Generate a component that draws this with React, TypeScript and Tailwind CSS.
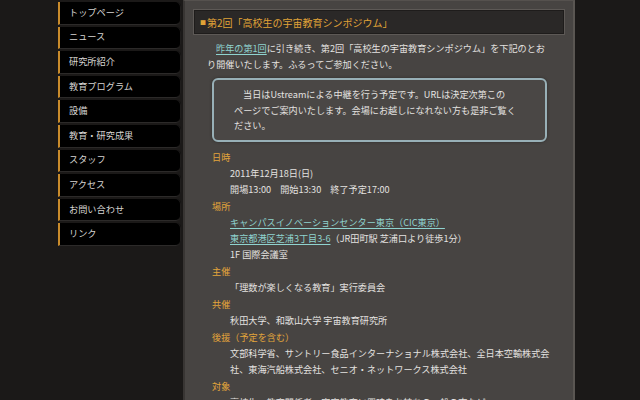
const navItems = [
  'トップページ',
  'ニュース',
  '研究所紹介',
  '教育プログラム',
  '設備',
  '教育・研究成果',
  'スタッフ',
  'アクセス',
  'お問い合わせ',
  'リンク',
]

const font = { fontFamily: '"Noto Sans CJK JP", "Noto Sans", sans-serif' }

function Link({ children }: { children: React.ReactNode }) {
  return <span className="text-[#8fd3cf] underline underline-offset-2">{children}</span>
}

function Dt({ children }: { children: React.ReactNode }) {
  return <dt className="leading-[15px] text-[#e3a53b]">{children}</dt>
}

function Dd({ children }: { children: React.ReactNode }) {
  return <dd className="mb-[2px] whitespace-nowrap pl-[18px] leading-[16px]">{children}</dd>
}

export default function App() {
  return (
    <div
      className="flex h-[400px] w-[640px] overflow-hidden bg-[#1b1918] text-[9.15px] text-[#e4e2e0]"
      style={font}
    >
      {/* 左メニュー */}
      <nav className="ml-[58px] mt-[2px] flex w-[123px] shrink-0 flex-col gap-[2px]">
        {navItems.map((label) => (
          <div
            key={label}
            className="flex h-[22.6px] shrink-0 items-center rounded-r-[5px] border-b border-l-2 border-b-[#2c2a29] border-l-[#c98b2b] bg-black pl-[9px] text-[9.2px] text-[#d6d4d2] shadow-[inset_-1px_0_0_#1f1d1c]"
          >
            {label}
          </div>
        ))}
      </nav>

      {/* 本文 */}
      <main className="ml-[2px] h-full w-[392px] shrink-0 border-l-2 border-r-2 border-t border-l-[#383533] border-r-[#5a5652] border-t-[#55514e] bg-[#474442]">
        <h1 className="mx-[8px] mt-[8px] flex h-[26px] items-center border border-[#5d5956] bg-[#2a2827] pl-[6px] text-[10px] text-[#e0a337] shadow-[inset_0_0_0_1px_#1e1c1b]">
          <span className="mr-[1px] text-[6px]">■</span>第2回「高校生の宇宙教育シンポジウム」
        </h1>

        <p className="mt-[5px] whitespace-nowrap pl-[22px] leading-[16px]">
          <span className="pl-[9px]" />
          <Link>昨年の第1回</Link>に引き続き、第2回「高校生の宇宙教育シンポジウム」を下記のとお
          <br />
          り開催いたします。ふるってご参加ください。
        </p>

        <div className="ml-[27px] mr-[26px] mt-[6px] whitespace-nowrap rounded-[6px] border-2 border-[#98b0b7] bg-[#4a4745] pb-[6px] pl-[20px] pt-[7px] leading-[15.5px] shadow-[0_0_3px_#2f2d2c]">
          <span className="pl-[9px]" />
          当日はUstreamによる中継を行う予定です。URLは決定次第この
          <br />
          ページでご案内いたします。会場にお越しになれない方も是非ご覧く
          <br />
          ださい。
        </div>

        <dl className="ml-[27px] mt-[8px]">
          <Dt>日時</Dt>
          <Dd>
            2011年12月18日(日)
            <br />
            開場13:00　開始13:30　終了予定17:00
          </Dd>
          <Dt>場所</Dt>
          <Dd>
            <Link>キャンパスイノベーションセンター東京（CIC東京）</Link>
            <br />
            <Link>東京都港区芝浦3丁目3-6</Link>（JR田町駅 芝浦口より徒歩1分）
            <br />
            1F 国際会議室
          </Dd>
          <Dt>主催</Dt>
          <Dd>「理数が楽しくなる教育」実行委員会</Dd>
          <Dt>共催</Dt>
          <Dd>秋田大学、和歌山大学 宇宙教育研究所</Dd>
          <Dt>後援（予定を含む）</Dt>
          <Dd>
            文部科学省、サントリー食品インターナショナル株式会社、全日本空輸株式会
            <br />
            社、東海汽船株式会社、セニオ・ネットワークス株式会社
          </Dd>
          <Dt>対象</Dt>
          <Dd>高校生、教育関係者、宇宙教育に興味をお持ちの一般の方など</Dd>
        </dl>
      </main>
    </div>
  )
}
